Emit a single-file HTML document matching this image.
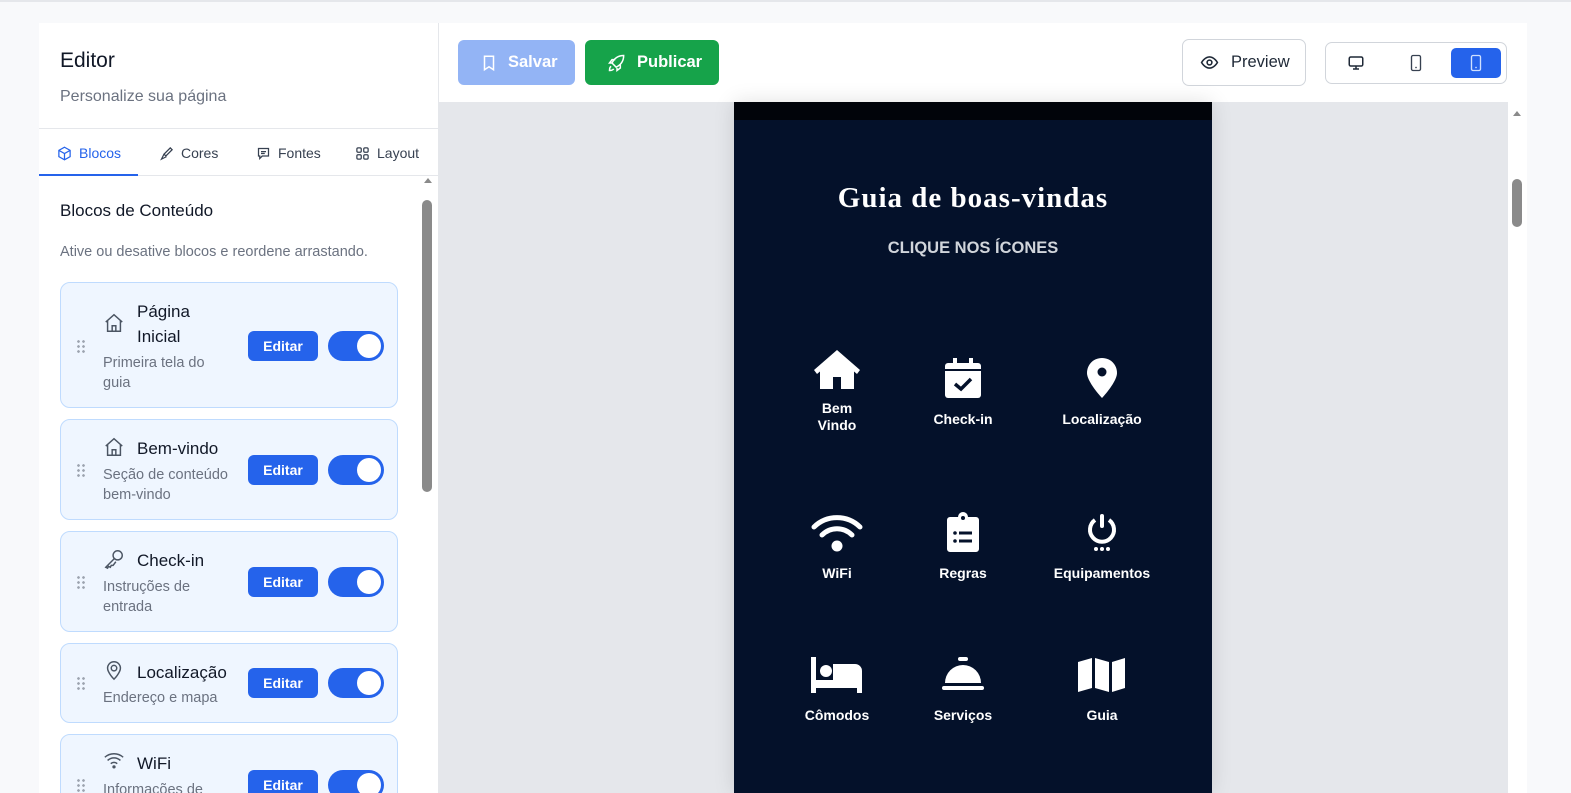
<!DOCTYPE html>
<html><head><meta charset="utf-8"><style>
*{box-sizing:border-box;margin:0;padding:0}
html,body{width:1571px;height:793px;overflow:hidden}
body{background:#f8f9fb;font-family:"Liberation Sans",sans-serif;position:relative;color:#111827}
.topline{position:absolute;left:0;top:0;width:1571px;height:2px;background:#e5e7eb}
.left{position:absolute;left:39px;top:23px;width:400px;height:770px;background:#fff;border-right:1px solid #e5e7eb;overflow:hidden}
.h1{position:absolute;left:21px;top:26px;font-size:21px;color:#111827}
.sub{position:absolute;left:21px;top:65px;font-size:16px;color:#6b7280}
.tabs{position:absolute;left:0;top:105px;width:399px;height:48px;border-top:1px solid #e5e7eb;border-bottom:1px solid #e5e7eb}
.tab{position:absolute;top:16px;font-size:14px;color:#374151;display:flex;align-items:center;gap:7px}
.tab svg{width:15px;height:15px}
.ul{position:absolute;left:0;bottom:-1px;width:99px;height:2px;background:#2563eb}
.sh{position:absolute;left:21px;top:178px;font-size:17px;color:#111827}
.sd{position:absolute;left:21px;top:221px;font-size:14.5px;color:#6b7280}
.card{position:absolute;left:21px;width:338px;background:#eff6ff;border:1px solid #bfdbfe;border-radius:10px}
.card .drag{position:absolute;left:15px;width:10px;height:15px;background-image:radial-gradient(circle,#9ca3af 1.2px,transparent 1.5px);background-size:5px 5px}
.card .ic{position:absolute;left:42px;width:22px;height:22px}
.card .t{position:absolute;left:76px;font-size:17px;color:#111827;line-height:25px}
.card .d{position:absolute;left:42px;font-size:14.5px;color:#6b7280;line-height:20px}
.ed{position:absolute;left:187px;width:70px;height:30px;background:#2563eb;color:#fff;border-radius:6px;font-size:14px;display:flex;align-items:center;justify-content:center;font-weight:bold}
.tg{position:absolute;left:267px;width:56px;height:30px;background:#2563eb;border-radius:15px}
.tg:after{content:"";position:absolute;right:3px;top:3px;width:24px;height:24px;border-radius:50%;background:#fff}
.sbl{position:absolute;left:383px;top:155px;width:12px;height:615px}
.right{position:absolute;left:439px;top:23px;width:1088px;height:770px;background:#e5e7eb;overflow:hidden}
.bar{position:absolute;left:0;top:0;width:1088px;height:79px;background:#fff}
.btn{position:absolute;top:17px;height:45px;border-radius:6px;color:#fff;font-size:16.5px;font-weight:bold;display:flex;align-items:center;gap:10px;padding-left:22px}
.phone{position:absolute;left:295px;top:79px;width:478px;height:691px;background:#04112a;box-shadow:0 0 20px rgba(0,0,0,.12)}
.title{position:absolute;left:0;width:478px;top:80px;text-align:center;font-family:"Liberation Serif",serif;font-weight:bold;font-size:29px;letter-spacing:1px;color:#fff}
.cl{position:absolute;left:0;width:478px;top:137px;text-align:center;font-size:16.5px;font-weight:bold;color:#d1d5db}
.it{position:absolute;width:150px;text-align:center;color:#fff;font-size:14px;font-weight:bold;line-height:17px}
.it svg{display:block;margin:0 auto}
</style></head><body>
<div class="topline"></div>
<div class="left">
 <div class="h1">Editor</div>
 <div class="sub">Personalize sua página</div>
 <div class="tabs">
  <div class="tab" style="left:18px;color:#2563eb"><svg viewBox="0 0 24 24" fill="none" stroke="#2563eb" stroke-width="2"><path d="M12 2l9 5v10l-9 5-9-5V7z M3 7l9 5 9-5 M12 12v10"/></svg>Blocos</div>
  <div class="tab" style="left:120px"><svg viewBox="0 0 24 24" fill="none" stroke="#374151" stroke-width="2"><path d="M18 3l3 3-10 10-3-3z M8 13l-3 6 -1 2 2-1 6-3"/></svg>Cores</div>
  <div class="tab" style="left:217px"><svg viewBox="0 0 24 24" fill="none" stroke="#374151" stroke-width="2"><path d="M4 4h16v12H10l-4 4v-4H4z M8 9h8 M8 12h6"/></svg>Fontes</div>
  <div class="tab" style="left:316px"><svg viewBox="0 0 24 24" fill="none" stroke="#374151" stroke-width="2"><rect x="3" y="3" width="7" height="7" rx="2"/><rect x="14" y="3" width="7" height="7" rx="2"/><rect x="3" y="14" width="7" height="7" rx="2"/><rect x="14" y="14" width="7" height="7" rx="2"/></svg>Layout</div>
  <div class="ul"></div>
 </div>
 <div class="sh">Blocos de Conteúdo</div>
 <div class="sd">Ative ou desative blocos e reordene arrastando.</div>

 <div class="card" style="top:259px;height:126px">
  <div class="drag" style="top:56px"></div>
  <svg class="ic" style="top:29px" viewBox="0 0 24 24" fill="none" stroke="#4b5563" stroke-width="1.6"><path d="M3 11l9-8 9 8 M5 9.5V21h14V9.5 M10 21v-6h4v6"/></svg>
  <div class="t" style="top:16px">Página<br>Inicial</div>
  <div class="d" style="top:70px">Primeira tela do<br>guia</div>
  <div class="ed" style="top:48px">Editar</div><div class="tg" style="top:48px"></div>
 </div>
 <div class="card" style="top:396px;height:101px">
  <div class="drag" style="top:43px"></div>
  <svg class="ic" style="top:16px" viewBox="0 0 24 24" fill="none" stroke="#4b5563" stroke-width="1.6"><path d="M3 11l9-8 9 8 M5 9.5V21h14V9.5 M10 21v-6h4v6"/></svg>
  <div class="t" style="top:16px">Bem-vindo</div>
  <div class="d" style="top:45px">Seção de conteúdo<br>bem-vindo</div>
  <div class="ed" style="top:35px">Editar</div><div class="tg" style="top:35px"></div>
 </div>
 <div class="card" style="top:508px;height:101px">
  <div class="drag" style="top:43px"></div>
  <svg class="ic" style="top:16px" viewBox="0 0 24 24" fill="none" stroke="#4b5563" stroke-width="1.6"><circle cx="16" cy="8" r="5"/><path d="M12.5 11.5L3 21l2 1 1-2 2 1 1-2 2 0 3-4"/></svg>
  <div class="t" style="top:16px">Check-in</div>
  <div class="d" style="top:45px">Instruções de<br>entrada</div>
  <div class="ed" style="top:35px">Editar</div><div class="tg" style="top:35px"></div>
 </div>
 <div class="card" style="top:620px;height:80px">
  <div class="drag" style="top:32px"></div>
  <svg class="ic" style="top:15px" viewBox="0 0 24 24" fill="none" stroke="#4b5563" stroke-width="1.6"><path d="M12 22s7-7 7-12a7 7 0 0 0-14 0c0 5 7 12 7 12z"/><circle cx="12" cy="10" r="3"/></svg>
  <div class="t" style="top:16px">Localização</div>
  <div class="d" style="top:44px">Endereço e mapa</div>
  <div class="ed" style="top:24px">Editar</div><div class="tg" style="top:24px"></div>
 </div>
 <div class="card" style="top:711px;height:100px">
  <div class="drag" style="top:43px"></div>
  <svg class="ic" style="top:14px" viewBox="0 0 24 24" fill="none" stroke="#4b5563" stroke-width="1.6"><path d="M2 9a15 15 0 0 1 20 0 M5 12.5a10 10 0 0 1 14 0 M8.5 16a5 5 0 0 1 7 0"/><circle cx="12" cy="19.5" r="1" fill="#4b5563"/></svg>
  <div class="t" style="top:16px">WiFi</div>
  <div class="d" style="top:45px">Informações de</div>
  <div class="ed" style="top:35px">Editar</div><div class="tg" style="top:35px"></div>
 </div>
 <div class="sbl">
  <div style="position:absolute;left:2px;top:0;border:4px solid transparent;border-bottom:5px solid #8a8a8a;border-top:0"></div>
  <div style="position:absolute;left:0;top:22px;width:10px;height:292px;background:#8a8a8a;border-radius:5px"></div>
 </div>
</div>

<div class="right">
 <div class="bar">
  <div class="btn" style="left:19px;width:117px;background:#93b4f5"><svg width="18" height="18" viewBox="0 0 24 24" fill="none" stroke="#fff" stroke-width="2"><path d="M6 3h12v18l-6-4-6 4z"/></svg>Salvar</div>
  <div class="btn" style="left:146px;width:134px;background:#16a34a"><svg width="20" height="20" viewBox="0 0 24 24" fill="none" stroke="#fff" stroke-width="1.8"><path d="M9 15l-3-3 c3-6 8-9 14-9 0 6-3 11-9 14z M6 12l-3 0 3-4h4 M12 18v3l4-3v-4 M5 16c-2 1-2 4-2 5 1 0 4 0 5-2"/></svg>Publicar</div>
  <div style="position:absolute;left:743px;top:16px;width:124px;height:47px;border:1px solid #d1d5db;border-radius:7px;display:flex;align-items:center;gap:12px;padding-left:17px;font-size:16.5px;color:#1f2937"><svg width="19" height="19" viewBox="0 0 24 24" fill="none" stroke="#1f2937" stroke-width="2"><path d="M2 12s4-7 10-7 10 7 10 7-4 7-10 7S2 12 2 12z"/><circle cx="12" cy="12" r="3"/></svg>Preview</div>
  <div style="position:absolute;left:886px;top:19px;width:182px;height:42px;border:1px solid #d1d5db;border-radius:7px">
   <svg style="position:absolute;left:21px;top:11px" width="18" height="18" viewBox="0 0 24 24" fill="none" stroke="#1f2937" stroke-width="2"><rect x="3" y="4" width="18" height="12" rx="2"/><path d="M8 20h8 M12 16v4"/></svg>
   <svg style="position:absolute;left:81px;top:10px" width="18" height="20" viewBox="0 0 24 24" fill="none" stroke="#374151" stroke-width="1.8"><rect x="6" y="2" width="12" height="20" rx="2"/><path d="M11 18h2"/></svg>
   <div style="position:absolute;left:125px;top:5px;width:50px;height:30px;background:#2563eb;border-radius:5px"></div>
   <svg style="position:absolute;left:141px;top:10px" width="18" height="20" viewBox="0 0 24 24" fill="none" stroke="#cfe0ff" stroke-width="1.8"><rect x="6" y="2" width="12" height="20" rx="2"/><path d="M11 18h2"/></svg>
  </div>
 </div>
 <div class="phone">
  <div style="position:absolute;left:0;top:0;width:478px;height:18px;background:#01040a"></div>
  <div class="title">Guia de boas-vindas</div>
  <div class="cl">CLIQUE NOS ÍCONES</div>

  <div class="it" style="left:28px;top:246px"><svg width="48" height="42" viewBox="0 0 48 42"><path fill="#fff" d="M24 2L1 22l3 4 3-2.5V41h13V29h8v12h13V23.5l3 2.5 3-4z"/></svg><div style="margin-top:10px">Bem<br>Vindo</div></div>
  <div class="it" style="left:154px;top:256px"><svg width="36" height="40" viewBox="0 0 36 40"><rect x="8" y="0" width="4" height="7" fill="#fff"/><rect x="24" y="0" width="4" height="7" fill="#fff"/><rect x="0" y="5" width="36" height="35" rx="3" fill="#fff"/><rect x="0" y="11" width="36" height="2" fill="#04112a"/><path d="M10 26l6 5 10-10" stroke="#04112a" stroke-width="3.5" fill="none"/></svg><div style="margin-top:13px">Check-in</div></div>
  <div class="it" style="left:293px;top:256px"><svg width="32" height="40" viewBox="0 0 32 40"><path fill="#fff" d="M16 0C7 0 1 7 1 15c0 9 15 25 15 25s15-16 15-25C31 7 25 0 16 0z"/><circle cx="16" cy="14" r="4.5" fill="#04112a"/></svg><div style="margin-top:13px">Localização</div></div>

  <div class="it" style="left:28px;top:412px"><svg width="52" height="38" viewBox="0 0 52 38"><path d="M3 13a33 33 0 0 1 46 0 M11 21a21 21 0 0 1 30 0" stroke="#fff" stroke-width="5" fill="none" stroke-linecap="round"/><circle cx="26" cy="32" r="5.5" fill="#fff"/></svg><div style="margin-top:13px">WiFi</div></div>
  <div class="it" style="left:154px;top:410px"><svg width="32" height="40" viewBox="0 0 32 40"><path fill="#fff" d="M3 5h8a5 5 0 0 1 10 0h8a3 3 0 0 1 3 3v29a3 3 0 0 1-3 3H3a3 3 0 0 1-3-3V8a3 3 0 0 1 3-3z"/><circle cx="16" cy="6" r="2" fill="#04112a"/><g fill="#04112a"><circle cx="8" cy="21" r="1.8"/><circle cx="8" cy="29" r="1.8"/><rect x="12" y="19.5" width="13" height="3"/><rect x="12" y="27.5" width="13" height="3"/></g></svg><div style="margin-top:13px">Regras</div></div>
  <div class="it" style="left:293px;top:412px"><svg width="32" height="38" viewBox="0 0 32 38"><path d="M9 6a12 12 0 1 0 14 0" stroke="#fff" stroke-width="4" fill="none"/><rect x="14" y="0" width="4" height="14" rx="2" fill="#fff"/><g fill="#fff"><circle cx="10" cy="35" r="2"/><circle cx="16" cy="35" r="2"/><circle cx="22" cy="35" r="2"/></g></svg><div style="margin-top:13px">Equipamentos</div></div>

  <div class="it" style="left:28px;top:555px"><svg width="52" height="36" viewBox="0 0 52 36"><rect x="0" y="0" width="5" height="36" fill="#fff"/><circle cx="15" cy="14" r="6" fill="#fff"/><path fill="#fff" d="M22 7h22a7 7 0 0 1 7 7v22h-5v-5H5v-8h17z"/></svg><div style="margin-top:14px">Cômodos</div></div>
  <div class="it" style="left:154px;top:555px"><svg width="42" height="34" viewBox="0 0 42 34"><rect x="16" y="0" width="10" height="4" rx="2" fill="#fff"/><path fill="#fff" d="M3 26a18 18 0 0 1 36 0z"/><rect x="0" y="29" width="42" height="4" rx="2" fill="#fff"/></svg><div style="margin-top:16px">Serviços</div></div>
  <div class="it" style="left:293px;top:555px"><svg width="48" height="36" viewBox="0 0 48 36"><path fill="#fff" d="M0 5l14-4v30L0 35z M17 1l14 4v30l-14-4z M34 5l13-4v30l-13 4z"/></svg><div style="margin-top:14px">Guia</div></div>
 </div>
 <div style="position:absolute;left:1069px;top:79px;width:19px;height:691px;background:#fff">
  <div style="position:absolute;left:5px;top:9px;border:4px solid transparent;border-bottom:5px solid #8a8a8a;border-top:0"></div>
  <div style="position:absolute;left:4px;top:77px;width:10px;height:48px;background:#8a8a8a;border-radius:5px"></div>
 </div>
</div>
</body></html>
